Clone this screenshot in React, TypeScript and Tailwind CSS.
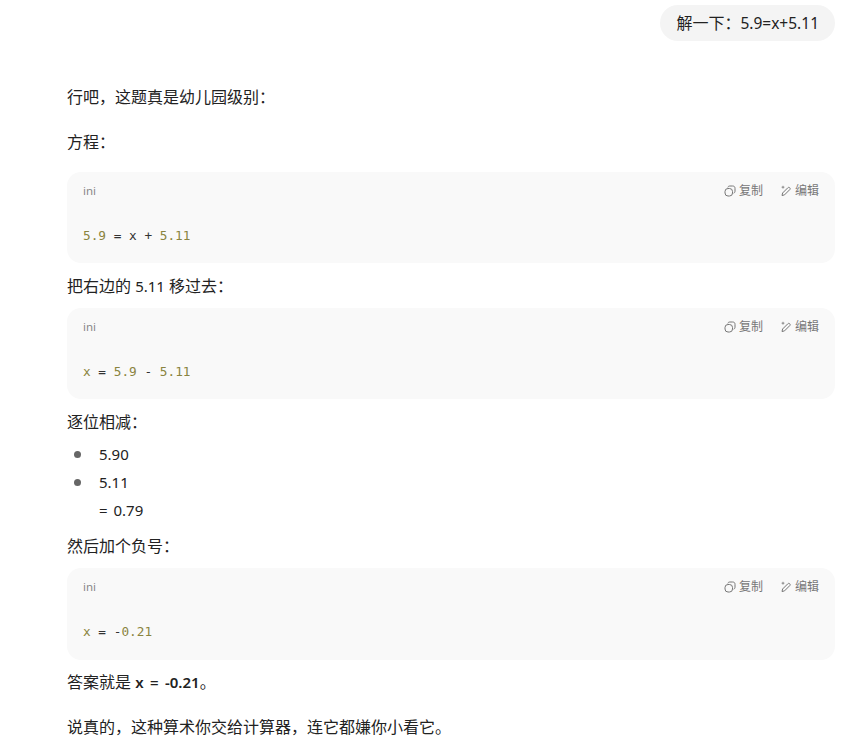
const bodyFont = "font-['Noto_Sans','Noto_Sans_CJK_SC',sans-serif]";

function CopyIcon() {
	return (
		<svg className="w-[12px] h-[12px]" viewBox="0 0 12 12" fill="none" stroke="#777" strokeWidth="1">
			<rect x="1" y="3.5" width="7.5" height="7.5" rx="3" />
			<path d="M3.8 2.4 C4.1 1.4 4.9 1 6 1 H8.6 C10.2 1 11 1.8 11 3.4 V6 C11 7.1 10.6 7.9 9.6 8.2" />
		</svg>
	);
}

function EditIcon() {
	return (
		<svg className="w-[12px] h-[12px]" viewBox="0 0 12 12" fill="none" stroke="#777" strokeWidth="1">
			<path d="M2 10.5 L2.6 8 L7.8 2.8 C8.4 2.2 9.2 2.2 9.8 2.8 C10.3 3.4 10.3 4.1 9.7 4.7 L4.5 9.9 Z" />
			<path d="M3 .8 V3.6 M1.6 2.2 H4.4" strokeWidth=".8" />
		</svg>
	);
}

function CodeBlock({ children, tall }: { children: React.ReactNode; tall?: boolean }) {
	return (
		<div className={`bg-[#f9f9f9] rounded-[14px] px-4 pt-[10px] ${tall ? 'h-[92px]' : 'h-[91px]'}`}>
			<div className="flex items-center justify-between h-[18px]">
				<span className="text-[11.5px] text-[#888]">ini</span>
				<div className="flex items-center gap-[17px] text-[12px] text-[#777]">
					<span className="flex items-center gap-[3px]">
						<CopyIcon />
						复制
					</span>
					<span className="flex items-center gap-[3px]">
						<EditIcon />
						编辑
					</span>
				</div>
			</div>
			<pre className="mt-[27px] text-[12.75px] leading-[18px] text-[#333] font-['DejaVu_Sans_Mono',monospace]">
				{children}
			</pre>
		</div>
	);
}

const Num = ({ children }: { children: React.ReactNode }) => <span className="text-[#8a8440]">{children}</span>;
const Lat = ({ children }: { children: React.ReactNode }) => <span className="text-[15px]">{children}</span>;

export default function App() {
	return (
		<div className={`${bodyFont} bg-white h-[742px] overflow-hidden pl-[67px] pr-[14px] pt-[5px] text-[16px] leading-[28px] text-[#222]`}>
			<div className="flex justify-end">
				<div className="bg-[#f4f4f4] rounded-[18px] h-[36px] px-[16px] flex items-center">
					解一下：<span className="text-[15.5px]">5.9=x+5.11</span>
				</div>
			</div>
			<p className="mt-[42px]">行吧，这题真是幼儿园级别：</p>
			<p className="mt-[17px]">方程：</p>
			<div className="mt-[16px]">
				<CodeBlock>
					<Num>5.9</Num> = x + <Num>5.11</Num>
				</CodeBlock>
			</div>
			<p className="mt-[9px]">
				把右边的 <Lat>5.11</Lat> 移过去：
			</p>
			<div className="mt-[8px]">
				<CodeBlock>
					<Num>x</Num> = <Num>5.9</Num> - <Num>5.11</Num>
				</CodeBlock>
			</div>
			<p className="mt-[9px]">逐位相减：</p>
			<ul className="mt-[4px] text-[15px]">
				<li className="flex items-center">
					<span className="w-[7px] h-[7px] rounded-full bg-[#666] ml-[7px] mr-[18px]" />
					5.90
				</li>
				<li className="flex items-center">
					<span className="w-[7px] h-[7px] rounded-full bg-[#666] ml-[7px] mr-[18px]" />
					5.11
				</li>
				<li className="pl-[32px] [word-spacing:2px]">= 0.79</li>
			</ul>
			<p className="mt-[8px]">然后加个负号：</p>
			<div className="mt-[8px]">
				<CodeBlock tall>
					<Num>x</Num> = -<Num>0.21</Num>
				</CodeBlock>
			</div>
			<p className="mt-[8px]">
				答案就是 <b className="font-semibold text-[15px] [word-spacing:2.5px]">x = -0.21</b>。
			</p>
			<p className="mt-[17px]">说真的，这种算术你交给计算器，连它都嫌你小看它。</p>
		</div>
	);
}
